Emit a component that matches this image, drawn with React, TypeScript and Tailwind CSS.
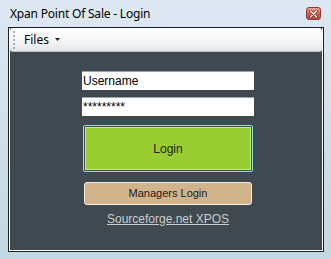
import React from "react";

const CloseButton = () => (
  <div className="w-[15px] h-[13px] rounded-[3px] border border-[#8a3a30] bg-gradient-to-b from-[#eaa69a] via-[#d5604e] to-[#c44834] flex items-center justify-center">
    <svg width="9" height="8" viewBox="0 0 9 8">
      <path d="M1.5 1 L7.5 7 M7.5 1 L1.5 7" stroke="#6a241a" strokeWidth="2.6" strokeLinecap="round" />
      <path d="M1.5 1 L7.5 7 M7.5 1 L1.5 7" stroke="#ffffff" strokeWidth="1.3" strokeLinecap="round" />
    </svg>
  </div>
);

const App = () => {
  return (
    <div className="w-[331px] h-[259px] flex flex-col bg-gradient-to-b from-[#dde8f2] via-[#cfdfeb] to-[#c3d7e3] font-['Liberation_Sans',sans-serif] overflow-hidden">
      {/* title bar */}
      <div className="h-[27px] flex items-center justify-between pl-[10px] pr-[10px]">
        <span className="text-[12px] text-black font-['Noto_Sans',sans-serif] leading-none tracking-[-0.2px]">
          Xpan Point Of Sale - Login
        </span>
        <CloseButton />
      </div>

      {/* client area */}
      <div className="flex-1 ml-[8px] mr-[7px] mb-[7px] border border-[#1b2226] flex flex-col">
        <div className="flex-1 border border-white border-t-0 flex flex-col bg-[#3f494f]">
          {/* toolbar */}
          <div className="h-[24px] flex items-center bg-gradient-to-b from-[#ffffff] via-[#f6f7f8] to-[#e3e6e9] rounded-[3px] border-b border-[#b9c2c8]">
            <div className="ml-[3px] flex flex-col gap-[2px]">
              <span className="w-[2px] h-[2px] bg-[#a8b0b6]" />
              <span className="w-[2px] h-[2px] bg-[#a8b0b6]" />
              <span className="w-[2px] h-[2px] bg-[#a8b0b6]" />
              <span className="w-[2px] h-[2px] bg-[#a8b0b6]" />
              <span className="w-[2px] h-[2px] bg-[#a8b0b6]" />
            </div>
            <span className="ml-[9px] text-[12px] text-black font-['Noto_Sans',sans-serif] leading-none">
              Files
            </span>
            <svg className="ml-[6px]" width="5" height="3" viewBox="0 0 5 3">
              <path d="M0 0 H5 L2.5 3 Z" fill="#222" />
            </svg>
          </div>

          {/* login panel */}
          <div className="flex flex-col items-start pl-[72px] pt-[19px]">
            <div className="w-[172px] h-[19px] bg-white border-t border-[#9aa4aa] flex items-center pl-[1px] text-[12px] text-black leading-none">
              Username
            </div>
            <div className="mt-[7px] w-[172px] h-[19px] bg-white border-t border-[#9aa4aa] flex items-center pl-[1px] text-[12px] text-black leading-none">
              *********
            </div>
            <button className="mt-[9px] ml-[1px] w-[170px] h-[47px] rounded-[2px] border border-[#8fe0ea] p-px">
              <div className="w-full h-full border border-[#c4ec7c] bg-[#9acd32] flex items-center justify-center text-[12px] text-[#1a1a1a]">
                Login
              </div>
            </button>
            <button className="mt-[10px] ml-[2px] w-[168px] h-[23px] rounded-[3px] border border-[#f3ece2] bg-[#d2b48c] flex items-center justify-center text-[11px] text-[#1a1a1a]">
              Managers Login
            </button>
            <a className="mt-[8px] w-[172px] text-center text-[12px] text-[#c8ced2] underline leading-none">
              Sourceforge.net XPOS
            </a>
          </div>
        </div>
      </div>
    </div>
  );
};

export default App;
